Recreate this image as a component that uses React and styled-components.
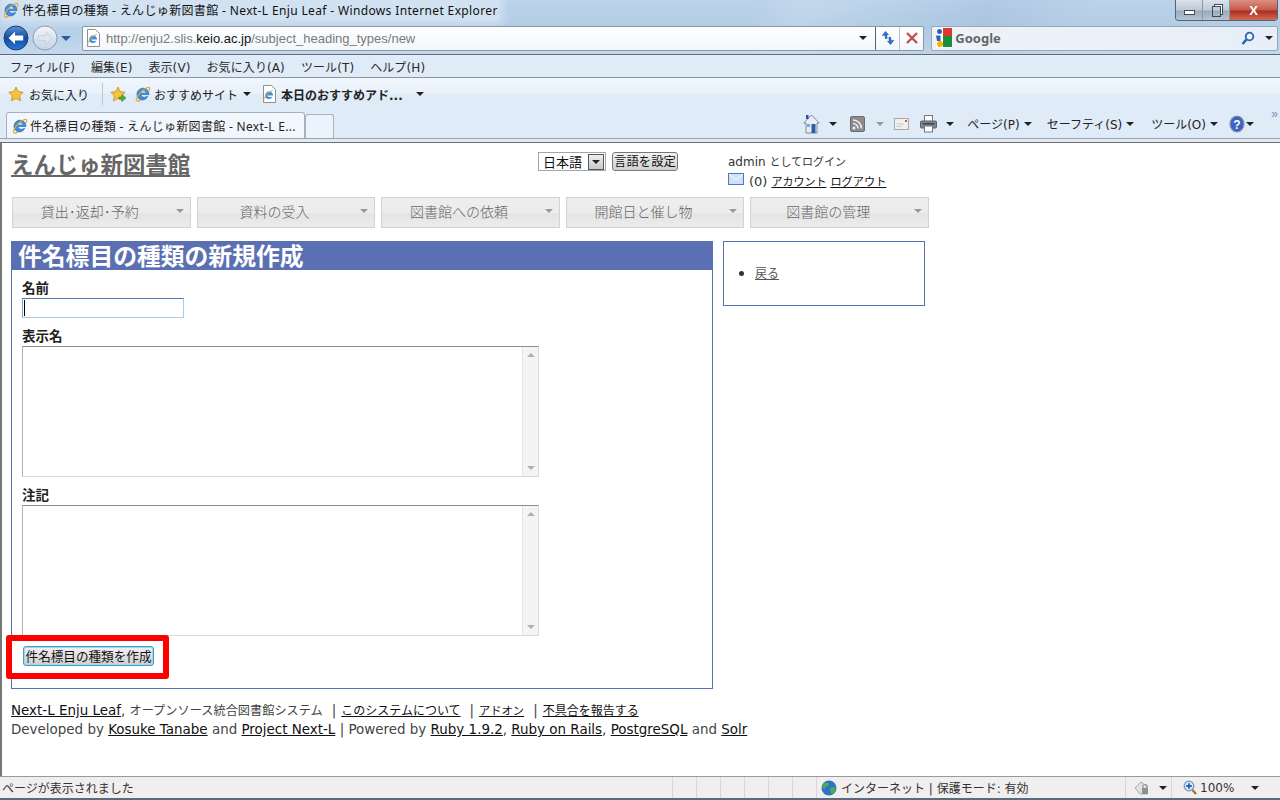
import React from "react";
import styled, { createGlobalStyle } from "styled-components";

const GlobalStyle = createGlobalStyle`
  html, body {
    margin: 0;
    padding: 0;
    background: #fff;
  }
  body {
    font-family: "DejaVu Sans", "Noto Sans CJK JP", sans-serif;
    font-size: 12px;
    color: #222;
    overflow: hidden;
  }
  * { box-sizing: border-box; }
`;

// small svg drawings
const IeLogo = ({ size = 16 }) => (
  <svg width={size} height={size} viewBox="0 0 16 16">
    <path d="M2 8.5C2 4.5 5 2 8.5 2.2 12 2.4 14 5 14 8.5H6c.2 3 4 3.6 6.6 1.6-.8 2.8-3 4-5 3.8C4 13.7 2 11.5 2 8.5z" fill="#3f8fdc" stroke="#1f5fae" strokeWidth=".6" />
    <path d="M6 6.6c.3-1.8 4-1.9 4.6 0z" fill="#fff" />
    <path d="M1.5 14.5C.2 12.8 5.5 4.5 12 1.8c2.6-1 3.4.4 2.2 3" fill="none" stroke="#e9a52c" strokeWidth="1.2" />
    <path d="M1.5 14.5c1 1 3 .4 4.5-.5" fill="none" stroke="#e9a52c" strokeWidth="1.2" />
  </svg>
);

const Star = ({ plus }) => (
  <svg width="17" height="17" viewBox="0 0 17 17">
    <path d="M8 1l2.2 4.6 5 .7-3.6 3.5.9 5L8 12.4l-4.5 2.4.9-5L.8 6.3l5-.7z" fill="#f6c33c" stroke="#c98a14" strokeWidth=".8" />
    {plus && <path d="M9 11h3V8.500l4 3.500-4 3.500V13H9z" fill="#49b13f" stroke="#2c7d28" strokeWidth=".5" />}
  </svg>
);

const DocIe = () => (
  <svg width="16" height="18" viewBox="0 0 16 18">
    <path d="M2.500 .5h8l4 4v13h-12z" fill="#fff" stroke="#8a8f96" />
    <path d="M4 11c0-3 2-4.500 4-4.500S12 8 12 10.500H6.500c.2 1.800 2.800 2 4.800 1-.6 1.800-2 2.500-3.300 2.500C5.500 14 4 13 4 11z" fill="#3f8fdc" />
    <path d="M3 15.500C2 14 6 7.500 11.500 5.500" fill="none" stroke="#e9a52c" />
  </svg>
);

const BackIcon = () => (
  <svg width="26" height="26" viewBox="0 0 26 26">
    <defs>
      <linearGradient id="bk" x1="0" y1="0" x2="0" y2="1">
        <stop offset="0" stopColor="#5f93d8" />
        <stop offset=".5" stopColor="#0f4aa5" />
        <stop offset="1" stopColor="#2b78d8" />
      </linearGradient>
    </defs>
    <circle cx="13" cy="13" r="12" fill="url(#bk)" stroke="#23406e" />
    <path d="M5.500 13L12 6.800v3.700h8.200v5H12v3.700z" fill="#fff" />
  </svg>
);

const ForwardIcon = () => (
  <svg width="26" height="26" viewBox="0 0 26 26">
    <defs>
      <linearGradient id="fw" x1="0" y1="0" x2="0" y2="1">
        <stop offset="0" stopColor="#f2f6fb" />
        <stop offset="1" stopColor="#c4d3e4" />
      </linearGradient>
    </defs>
    <circle cx="13" cy="13" r="12" fill="url(#fw)" stroke="#8b9bb0" />
    <path d="M20.500 13L14 6.800v3.700H5.800v5H14v3.700z" fill="#dde6ef" stroke="#bcc8d4" strokeWidth=".6" />
  </svg>
);

const RefreshIcon = () => (
  <svg width="16" height="16" viewBox="0 0 16 16">
    <path d="M6 1L1.500 5.500H4.500V9H7V5.500H9z" fill="#2f6fbd" transform="rotate(-8 5 5)" />
    <path d="M10 15l4.500-4.500h-3V7H9v3.500H7z" fill="#2f6fbd" transform="rotate(-8 10 11)" />
  </svg>
);

const StopIcon = () => (
  <svg width="14" height="14" viewBox="0 0 14 14">
    <path d="M2 2l10 10M12 2L2 12" stroke="#c0504d" strokeWidth="2.400" />
  </svg>
);

const GoogleIcon = () => (
  <svg width="16" height="20" viewBox="0 0 16 20">
    <rect x="0" y="0" width="16" height="20" fill="#fff" />
    <circle cx="3.500" cy="3.500" r="2.500" fill="#2a5fc4" />
    <rect x="7" y="0" width="9" height="8" fill="#d93a2b" />
    <path d="M0 7.500h4.500V13H1z" fill="#2a5fc4" />
    <rect x="7" y="8" width="9" height="11" fill="#1b8e3a" />
    <circle cx="4" cy="16" r="3" fill="#f4b400" />
  </svg>
);

const SearchIcon = () => (
  <svg width="14" height="15" viewBox="0 0 14 15">
    <circle cx="8.500" cy="5.500" r="3.800" fill="#eef5fc" stroke="#2b63b0" strokeWidth="1.800" />
    <path d="M5.500 8.500L1.500 13" stroke="#2b63b0" strokeWidth="2.600" />
  </svg>
);

const HomeIcon = () => (
  <svg width="17" height="20" viewBox="0 0 17 20">
    <path d="M8.500 1L.8 9h2.200v10h11V9h2.200z" fill="#e9eef5" stroke="#5b7398" strokeWidth=".8" />
    <rect x="3" y="1" width="2.500" height="4" fill="#2f4fa8" />
    <rect x="8.500" y="10" width="4" height="9" fill="#2e5d9e" />
    <rect x="4" y="10" width="3" height="3" fill="#7eaadb" />
  </svg>
);

const FeedIcon = () => (
  <svg width="15" height="16" viewBox="0 0 15 16">
    <rect x=".5" y=".5" width="14" height="15" rx="1.500" fill="#8c8c8c" stroke="#6c6c6c" />
    <circle cx="4" cy="12" r="1.500" fill="#eee" />
    <path d="M3 7.500a5 5 0 0 1 5 5M3 4a8.500 8.500 0 0 1 8.500 8.500" fill="none" stroke="#eee" strokeWidth="1.600" />
  </svg>
);

const MailDim = () => (
  <svg width="15" height="12" viewBox="0 0 15 12">
    <rect x=".5" y=".5" width="14" height="11" fill="#f0f0f0" stroke="#a8a8a8" />
    <path d="M2.500 6h7M2.500 8.500h5" stroke="#c4c4c4" />
    <rect x="11" y="2" width="2" height="2" fill="#c85a50" />
  </svg>
);

const PrintIcon = () => (
  <svg width="17" height="18" viewBox="0 0 17 18">
    <rect x="4.500" y=".5" width="8" height="6" fill="#fff" stroke="#777" />
    <rect x=".5" y="6" width="16" height="7" rx="1" fill="#7d8590" stroke="#5c636c" />
    <rect x="4.500" y="11" width="8" height="6" fill="#fff" stroke="#777" />
    <rect x="2.500" y="8" width="12" height="1.500" fill="#444" />
  </svg>
);

const HelpIcon = () => (
  <svg width="16" height="18" viewBox="0 0 16 18">
    <ellipse cx="8" cy="9" rx="7" ry="8" fill="#3a63c4" stroke="#8a95a8" strokeWidth="1.200" />
    <text x="8" y="13.500" fontSize="12" fontWeight="700" fill="#fff" textAnchor="middle" fontFamily="Liberation Sans">?</text>
  </svg>
);

const Globe = () => (
  <svg width="16" height="16" viewBox="0 0 16 16">
    <circle cx="8" cy="8" r="7.500" fill="#2f72c4" />
    <path d="M3 3.500c2-1 4-1 5 0L7 6 4.500 7 3 9 1 7zM9 8l4-1 2 1-1.500 4L11 14 9.500 12z" fill="#4cae4c" />
  </svg>
);

const Lock = () => (
  <svg width="17" height="16" viewBox="0 0 17 16">
    <path d="M1 8l6-6 6 4v8H6z" fill="#dfe1e3" stroke="#a8adb2" />
    <path d="M9 8V6.500a2 2 0 0 1 4 0V8" fill="none" stroke="#8c9196" strokeWidth="1.200" />
    <rect x="8" y="8" width="6" height="6" fill="#8c9196" />
  </svg>
);

const ZoomIcon = () => (
  <svg width="14" height="15" viewBox="0 0 14 15">
    <circle cx="6" cy="6" r="4.800" fill="#dbe8f7" stroke="#6e93bd" strokeWidth="1.200" />
    <path d="M6 3.200v5.600M3.200 6h5.600" stroke="#2b63b0" strokeWidth="1.800" />
    <path d="M9.500 10l3.500 4" stroke="#a06a30" strokeWidth="2" />
  </svg>
);

const Envelope = () => (
  <svg width="16" height="12" viewBox="0 0 16 12">
    <rect x=".5" y=".5" width="15" height="11" fill="#cfe0f8" stroke="#4f7ab8" />
    <path d="M1 1l7 6 7-6" fill="none" stroke="#fff" />
  </svg>
);

// browser chrome
const Chrome = styled.div`
  display: flex;
  flex-direction: column;
  height: 143px;
  background: #e0ebf8;
`;

const Glass = styled.div`
  height: 56px;
  background:
    linear-gradient(115deg, transparent 58%, rgba(255, 255, 255, 0.12) 62%, transparent 68%, rgba(120, 150, 190, 0.15) 76%, transparent 84%),
    linear-gradient(180deg, #bcd3ea 0%, #b3cde6 50%, #c3d9ee 100%);
  border-bottom: 1px solid #5b6b7c;
`;

const TitleBar = styled.div`
  display: flex;
  align-items: flex-start;
  height: 25px;
  padding-left: 3px;
`;

const TitleText = styled.div`
  display: flex;
  align-items: center;
  gap: 3px;
  height: 20px;
  font-family: "Noto Sans", "Noto Sans CJK JP", sans-serif;
  font-size: 12px;
  letter-spacing: 0.36px;
  color: #111;
  white-space: nowrap;
  background: rgba(225, 236, 247, 0.6);
  box-shadow: 0 0 8px 5px rgba(225, 236, 247, 0.6);
`;

const WindowButtons = styled.div`
  display: flex;
  margin-left: auto;
  margin-right: 2px;
  width: 103px;
  height: 21px;
  border: 1px solid #59636e;
  border-top: none;
  border-radius: 0 0 4px 4px;
  overflow: hidden;
`;

const WinButton = styled.div`
  flex: ${(p) => p.$grow || 1};
  display: flex;
  align-items: center;
  justify-content: center;
  color: #fff;
  font: 700 13px "Liberation Sans", sans-serif;
  border-right: 1px solid #8b98a6;
  background: ${(p) =>
    p.$danger
      ? "linear-gradient(180deg, #dc8f84 0%, #c9584c 50%, #a92f22 55%, #d26a55 100%)"
      : "linear-gradient(180deg, #dbe3ec 0%, #bcc9d7 50%, #9aabbd 55%, #b6c4d2 100%)"};
  &:last-child { border-right: none; }
`;

const MinGlyph = styled.span`
  width: 11px;
  height: 5px;
  margin-top: 4px;
  border: 1px solid #3f4a55;
  background: #fff;
`;

const MaxGlyph = styled.span`
  width: 9px;
  height: 11px;
  margin-top: 2px;
  border: 1px solid #3f4a55;
  box-shadow: 2px -2px 0 -1px #fff, 2px -2px 0 0 #3f4a55;
`;

const AddressRow = styled.div`
  display: flex;
  align-items: center;
  height: 26px;
  padding: 0 2px 0 3px;
`;

const NavCircles = styled.div`
  display: flex;
  align-items: center;
  gap: 3px;
  width: 79px;
`;

const AddressBox = styled.div`
  display: flex;
  align-items: center;
  width: 843px;
  height: 25px;
  background: linear-gradient(180deg, #fff, #f3f7fb);
  border: 1px solid #8a97a5;
  border-radius: 2px;
`;

const PageIconSlot = styled.div`
  display: flex;
  margin-left: 2px;
`;

const Url = styled.div`
  flex: 1;
  margin-left: 5px;
  font: 13px "Liberation Sans", sans-serif;
  color: #7a7a7a;
  & b { font-weight: 400; color: #111; }
`;

const BoxButton = styled.div`
  width: 24px;
  height: 100%;
  display: flex;
  align-items: center;
  justify-content: center;
  margin-left: ${(p) => p.$left || 0}px;
  border-left: 1px solid ${(p) => (p.$strong ? "#56616d" : "#b8c3cf")};
`;

const SearchBox = styled.div`
  display: flex;
  align-items: center;
  width: 347px;
  height: 25px;
  margin-left: 7px;
  padding: 0 4px;
  background: linear-gradient(90deg, #eef3f9, #e6eef7);
  border: 1px solid #9aa8b6;
  border-radius: 2px;
`;

const SearchLabel = styled.div`
  flex: 1;
  margin-left: 3px;
  font: 700 13px "Noto Sans", sans-serif;
  color: #666;
`;

const MenuBar = styled.div`
  display: flex;
  align-items: center;
  gap: 16px;
  height: 24px;
  padding: 1px 0 0 10px;
  background: #e0ebf8;
  border-bottom: 1px solid #8e979f;
  box-shadow: inset 0 1px 0 #ecebfa;
  color: #2a2a2a;
  letter-spacing: 0.1px;
`;

const FavBar = styled.div`
  display: flex;
  align-items: center;
  height: 32px;
  padding-left: 8px;
  background: linear-gradient(180deg, #f0f6fd 0%, #e8f0fa 50%, #e0ebf8 51%);
  white-space: nowrap;
`;

const FavItem = styled.div`
  display: flex;
  align-items: center;
  gap: ${(p) => p.$gap || 4}px;
  margin-left: ${(p) => p.$left || 0}px;
  font-weight: ${(p) => (p.$bold ? 700 : 400)};
`;

const Separator = styled.div`
  width: 1px;
  height: 22px;
  margin-left: 13px;
  background: #bcc8d6;
`;

const Caret = styled.span`
  display: inline-block;
  flex: none;
  width: 0;
  height: 0;
  margin-left: ${(p) => p.$left || 0}px;
  border-left: ${(p) => p.$size || 4}px solid transparent;
  border-right: ${(p) => p.$size || 4}px solid transparent;
  border-top: ${(p) => p.$size || 4}px solid ${(p) => p.$color || "#222"};
`;

const TabRow = styled.div`
  display: flex;
  align-items: flex-end;
  height: 30px;
  padding-left: 6px;
  background: #e0ebf8;
  border-bottom: 1px solid #9aa3ac;
`;

const Tab = styled.div`
  display: flex;
  align-items: center;
  gap: 2px;
  width: 299px;
  height: 26px;
  padding-left: 5px;
  font-family: "Noto Sans", "Noto Sans CJK JP", sans-serif;
  font-size: 12px;
  letter-spacing: 0.3px;
  white-space: nowrap;
  background: #f2f7fd;
  border: 1px solid #a4b3c4;
  border-bottom: none;
  border-radius: 3px 3px 0 0;
`;

const NewTab = styled.div`
  width: 29px;
  height: 24px;
  background: #edf3fb;
  border: 1px solid #a4b3c4;
  border-bottom: none;
  border-radius: 3px 3px 0 0;
`;

const CommandBar = styled.div`
  display: flex;
  align-items: center;
  align-self: stretch;
  margin-left: auto;
  padding-right: 26px;
  position: relative;
  color: #222;
  white-space: nowrap;
`;

const Command = styled.div`
  display: flex;
  align-items: center;
  margin-left: ${(p) => p.$left || 0}px;
`;

const Chevrons = styled.span`
  position: absolute;
  right: 2px;
  top: -3px;
  font: 12px "Liberation Sans", sans-serif;
  color: #6f8fb8;
`;

const ChromeEdge = styled.div`
  height: 4px;
  background: linear-gradient(180deg, #e0ebf8 0 3px, #6f6f6f 3px);
`;

// page
const Viewport = styled.div`
  position: relative;
  height: 633px;
  border-left: 2px solid #777;
  padding-left: 9px;
  background: #fff;
`;

const Header = styled.div`
  display: flex;
  height: 54px;
`;

const SiteTitle = styled.a`
  display: block;
  width: 527px;
  margin-top: 4px;
  font: 700 22.4px/32px "Noto Sans CJK JP", sans-serif;
  color: #666;
  text-decoration: underline;
`;

const LangForm = styled.div`
  display: flex;
  align-items: flex-start;
  gap: 6px;
  width: 190px;
  padding-top: 9px;
`;

const LangSelect = styled.div`
  display: flex;
  align-items: center;
  justify-content: space-between;
  width: 68px;
  height: 19px;
  padding: 0 1px 0 4px;
  border: 1px solid #a5a5a5;
  font: 13px/17px "Noto Sans CJK JP", sans-serif;
  color: #111;
`;

const SelectArrow = styled.span`
  display: flex;
  align-items: center;
  justify-content: center;
  width: 16px;
  height: 16px;
  background: linear-gradient(180deg, #eee, #c8c8c8);
  border: 1px solid #555;
`;

const LangButton = styled.button`
  width: 66px;
  height: 19px;
  padding: 0;
  font: 12.4px/15px "Noto Sans CJK JP", sans-serif;
  white-space: nowrap;
  color: #111;
  background: linear-gradient(180deg, #f2f2f2, #cfcfcf);
  border: 1px solid #777;
  border-radius: 3px;
`;

const UserBox = styled.div`
  padding-top: 9px;
  font-size: 12px;
  line-height: 20px;
  color: #333;
`;

const UserRow = styled.div`
  display: flex;
  align-items: center;
  gap: 4px;
  height: 18px;
`;

const EnvelopeSlot = styled.span`
  display: flex;
  margin: 0 1px 6px 0;
`;

const Ja = styled.span`
  font-size: ${(p) => p.$size || 12}px;
`;

const Link = styled.a`
  color: ${(p) => p.$color || "#111"};
  text-decoration: underline;
`;

const Pipe = styled.span`
  margin: 0 5px 0 9px;
`;

const NavBar = styled.div`
  display: flex;
  gap: 6px;
  padding-left: 1px;
`;

const NavItem = styled.div`
  display: flex;
  align-items: center;
  width: 178.6px;
  height: 31px;
  padding: 0 6px 3px 0;
  font: 14px "Noto Sans CJK JP", sans-serif;
  font-weight: 300;
  color: #666;
  background: linear-gradient(180deg, #eeeeee 0%, #ececec 50%, #e4e4e4 55%, #ececec 100%);
  border: 1px solid #d2d2d2;
`;

const NavLabel = styled.span`
  flex: 1;
  text-align: center;
  padding-right: 9px;
`;

const Columns = styled.div`
  display: flex;
  align-items: flex-start;
  gap: 10px;
  margin-top: 13px;
`;

const MainPanel = styled.div`
  width: 702px;
  height: 448px;
  border: 1px solid #5a70b2;
  border-top: none;
`;

const PanelTitle = styled.h1`
  margin: 0 -1px;
  height: 29px;
  padding-left: 7px;
  background: #5a70b2;
  color: #fff;
  font: 700 23.8px/27px "Noto Sans CJK JP", sans-serif;
`;

const Form = styled.div`
  padding: 9px 10px 0;
`;

const FieldLabel = styled.div`
  height: 19px;
  font: 700 13.5px/16px "Noto Sans CJK JP", sans-serif;
  color: #222;
`;

const NameInput = styled.div`
  width: 162px;
  height: 20px;
  padding: 1px 1px;
  background: #fff;
  border: 1px solid #a9cde6;
  border-top-color: #4c7ba8;
  border-left-color: #7ea6c6;
  margin-bottom: 9px;
`;

const TextCursor = styled.span`
  display: block;
  width: 1px;
  height: 16px;
  background: #000;
`;

const TextBox = styled.div`
  display: flex;
  justify-content: flex-end;
  width: 517px;
  height: 131px;
  margin-bottom: 9px;
  border: 1px solid #d8d8e2;
  border-top-color: #8e8e8e;
  border-left-color: #b5b5b5;
`;

const ScrollBar = styled.div`
  display: flex;
  flex-direction: column;
  align-items: center;
  justify-content: space-between;
  width: 16px;
  padding: 6px 0;
  background: #f4f4f4;
  border-left: 1px solid #e4e4e4;
`;

const ArrowUp = styled.span`
  width: 0;
  height: 0;
  border-left: 4px solid transparent;
  border-right: 4px solid transparent;
  border-bottom: 4px solid #b0b0b0;
`;

const SubmitRow = styled.div`
  padding: 1px 0 0 1px;
`;

const SubmitButton = styled.button`
  width: 131px;
  height: 20px;
  padding: 0;
  font: 12.6px/16px "Noto Sans CJK JP", sans-serif;
  white-space: nowrap;
  color: #111;
  background: linear-gradient(180deg, #f2f2f2, #cfcfcf);
  border: 1px solid #3f9ccb;
  border-radius: 3px;
  box-shadow: inset 0 0 0 1px #9fd8f0;
`;

const SidePanel = styled.div`
  width: 202px;
  height: 65px;
  border: 1px solid #5a70b2;
`;

const SideList = styled.ul`
  margin: 22px 0 0;
  padding-left: 31px;
  font: 12px/18px "Noto Sans CJK JP", sans-serif;
  color: #333;
`;

const Footer = styled.div`
  margin-top: 12px;
  font-size: 13.45px;
  color: #444;
  white-space: nowrap;
`;

const FooterLine = styled.div`
  height: 19px;
  line-height: 19px;
`;

const Highlight = styled.div`
  position: absolute;
  left: 4px;
  top: 492px;
  width: 163px;
  height: 44px;
  border: 6px solid #ff0000;
  border-radius: 3px;
`;

// status bar
const StatusBar = styled.div`
  display: flex;
  height: 24px;
  background: #f0eeee;
  border-top: 1px solid #9a9a9a;
  border-bottom: 2px solid #5b6b7c;
  color: #333;
`;

const StatusText = styled.div`
  width: 672px;
  padding-left: 2px;
  line-height: 24px;
`;

const StatusCell = styled.div`
  display: flex;
  align-items: center;
  gap: ${(p) => p.$gap || 0}px;
  width: ${(p) => p.$width}px;
  padding-left: ${(p) => p.$pad || 0}px;
  border-left: 1px solid #d8d6d6;
  white-space: nowrap;
`;

const navItems = ["貸出･返却･予約", "資料の受入", "図書館への依頼", "開館日と催し物", "図書館の管理"];
const menuItems = ["ファイル(F)", "編集(E)", "表示(V)", "お気に入り(A)", "ツール(T)", "ヘルプ(H)"];

export default function App() {
  return (
    <>
      <GlobalStyle />
      <Chrome>
        <Glass>
          <TitleBar>
            <TitleText>
              <IeLogo />
              件名標目の種類 - えんじゅ新図書館 - Next-L Enju Leaf - Windows Internet Explorer
            </TitleText>
            <WindowButtons>
              <WinButton $grow={27}><MinGlyph /></WinButton>
              <WinButton $grow={26}><MaxGlyph /></WinButton>
              <WinButton $grow={48} $danger>X</WinButton>
            </WindowButtons>
          </TitleBar>
          <AddressRow>
            <NavCircles>
              <BackIcon />
              <ForwardIcon />
              <Caret $size={5} $color="#2c5c9c" />
            </NavCircles>
            <AddressBox>
              <PageIconSlot><DocIe /></PageIconSlot>
              <Url>http://enju2.slis.<b>keio.ac.jp</b>/subject_heading_types/new</Url>
              <Caret />
              <BoxButton $strong $left={8}><RefreshIcon /></BoxButton>
              <BoxButton><StopIcon /></BoxButton>
            </AddressBox>
            <SearchBox>
              <GoogleIcon />
              <SearchLabel>Google</SearchLabel>
              <SearchIcon />
              <Caret $left={10} />
            </SearchBox>
          </AddressRow>
        </Glass>
        <MenuBar>
          {menuItems.map((item) => (
            <span key={item}>{item}</span>
          ))}
        </MenuBar>
        <FavBar>
          <FavItem>
            <Star />
            お気に入り
          </FavItem>
          <Separator />
          <FavItem $left={7}>
            <Star plus />
          </FavItem>
          <FavItem $left={8} $gap={3}>
            <IeLogo />
            おすすめサイト
            <Caret $left={2} />
          </FavItem>
          <FavItem $left={10} $gap={4} $bold>
            <DocIe />
            本日のおすすめアド...
            <Caret $left={9} />
          </FavItem>
        </FavBar>
        <TabRow>
          <Tab>
            <IeLogo />
            件名標目の種類 - えんじゅ新図書館 - Next-L E...
          </Tab>
          <NewTab />
          <CommandBar>
            <HomeIcon />
            <Caret $left={9} />
            <Command $left={13}><FeedIcon /></Command>
            <Caret $left={11} $color="#999" />
            <Command $left={10}><MailDim /></Command>
            <Command $left={11}><PrintIcon /></Command>
            <Caret $left={9} />
            <Command $left={13}>ページ(P)<Caret $left={4} /></Command>
            <Command $left={15}>セーフティ(S)<Caret $left={4} /></Command>
            <Command $left={17}>ツール(O)<Caret $left={4} /></Command>
            <Command $left={11}><HelpIcon /><Caret $left={1} /></Command>
            <Chevrons>»</Chevrons>
          </CommandBar>
        </TabRow>
        <ChromeEdge />
      </Chrome>
      <Viewport>
        <Header>
          <SiteTitle>えんじゅ新図書館</SiteTitle>
          <LangForm>
            <LangSelect>
              日本語
              <SelectArrow><Caret /></SelectArrow>
            </LangSelect>
            <LangButton>言語を設定</LangButton>
          </LangForm>
          <UserBox>
            <div>admin <Ja $size={11}>としてログイン</Ja></div>
            <UserRow>
              <EnvelopeSlot><Envelope /></EnvelopeSlot>
              <Ja $size={13}>(0)</Ja>
              <Link><Ja $size={11}>アカウント</Ja></Link>
              <Link><Ja $size={11.2}>ログアウト</Ja></Link>
            </UserRow>
          </UserBox>
        </Header>
        <NavBar>
          {navItems.map((item) => (
            <NavItem key={item}>
              <NavLabel>{item}</NavLabel>
              <Caret $color="#999" />
            </NavItem>
          ))}
        </NavBar>
        <Columns>
          <MainPanel>
            <PanelTitle>件名標目の種類の新規作成</PanelTitle>
            <Form>
              <FieldLabel>名前</FieldLabel>
              <NameInput><TextCursor /></NameInput>
              <FieldLabel>表示名</FieldLabel>
              <TextBox>
                <ScrollBar><ArrowUp /><Caret $color="#b0b0b0" /></ScrollBar>
              </TextBox>
              <FieldLabel>注記</FieldLabel>
              <TextBox>
                <ScrollBar><ArrowUp /><Caret $color="#b0b0b0" /></ScrollBar>
              </TextBox>
              <SubmitRow>
                <SubmitButton>件名標目の種類を作成</SubmitButton>
              </SubmitRow>
            </Form>
          </MainPanel>
          <SidePanel>
            <SideList>
              <li><Link $color="#555">戻る</Link></li>
            </SideList>
          </SidePanel>
        </Columns>
        <Footer>
          <FooterLine>
            <Link>Next-L Enju Leaf</Link>, <Ja $size={12.2}>オープンソース統合図書館システム</Ja><Pipe>|</Pipe><Link><Ja>このシステムについて</Ja></Link><Pipe>|</Pipe><Link><Ja $size={11.25}>アドオン</Ja></Link><Pipe>|</Pipe><Link><Ja>不具合を報告する</Ja></Link>
          </FooterLine>
          <FooterLine>
            Developed by <Link>Kosuke Tanabe</Link> and <Link>Project Next-L</Link> | Powered by <Link>Ruby 1.9.2</Link>, <Link>Ruby on Rails</Link>, <Link>PostgreSQL</Link> and <Link>Solr</Link>
          </FooterLine>
        </Footer>
        <Highlight />
      </Viewport>
      <StatusBar>
        <StatusText>ページが表示されました</StatusText>
        <StatusCell $width={24} />
        <StatusCell $width={24} />
        <StatusCell $width={24} />
        <StatusCell $width={24} />
        <StatusCell $width={24} />
        <StatusCell $width={24} />
        <StatusCell $width={309} $pad={4} $gap={4}>
          <Globe />
          インターネット | 保護モード: 有効
        </StatusCell>
        <StatusCell $width={46} $pad={8}>
          <Lock />
          <Caret $left={8} />
        </StatusCell>
        <StatusCell $width={109} $pad={11} $gap={3}>
          <ZoomIcon />
          100%
          <Caret $left={14} />
        </StatusCell>
      </StatusBar>
    </>
  );
}
